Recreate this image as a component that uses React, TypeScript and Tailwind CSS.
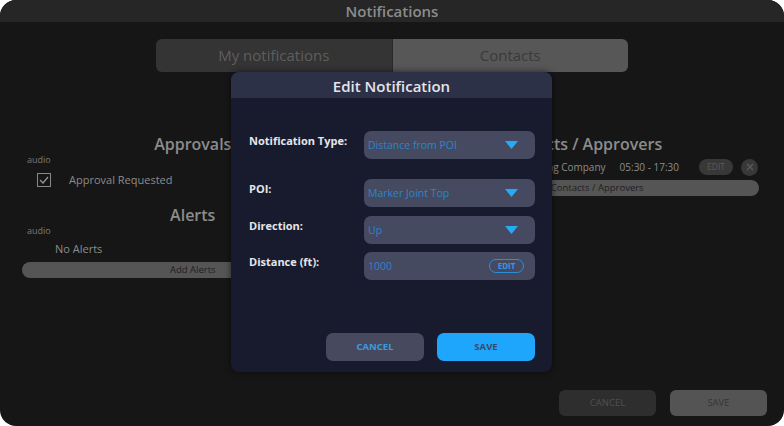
import React from "react";

const font = { fontFamily: '"Open Sans", "Noto Sans", sans-serif' };

function Caret() {
  return (
    <svg width="13" height="8" viewBox="0 0 13 8" className="shrink-0">
      <polygon points="0,0 13,0 6.5,8" fill="#29a8f5" />
    </svg>
  );
}

function Field({ value, children }: { value: string; children?: React.ReactNode }) {
  return (
    <div className="w-[171px] h-[28px] rounded-[7px] bg-[#464a60] flex items-center justify-between pl-[4px] pr-[17px]">
      <span className="mt-[2px] text-[10.5px] text-[#2b84cc]">{value}</span>
      {children}
    </div>
  );
}

function Row({ label, children, className }: { label: string; children: React.ReactNode; className?: string }) {
  return (
    <div className={"flex items-center " + (className ?? "")}>
      <div className="w-[115px] mb-[8px] text-[11px] font-bold text-[#e6e6ea]">{label}</div>
      {children}
    </div>
  );
}

export default function App() {
  return (
    <div className="w-[784px] h-[426px] bg-white" style={font}>
      <div className="relative w-[784px] h-[426px] rounded-[16px] bg-[#161616] overflow-hidden flex flex-col">
        <div className="h-[22px] bg-[#262626] flex items-center justify-center">
          <span className="text-[15px] font-semibold text-[#8c8c8c] leading-none">Notifications</span>
        </div>

        <div className="mt-[17px] mx-auto w-[472px] h-[33px] flex rounded-[6px] overflow-hidden">
          <div className="flex-1 bg-[#343434] flex items-center justify-center text-[15px] text-[#5e5e5e]">My notifications</div>
          <div className="w-px bg-[#2a2a2a]" />
          <div className="flex-1 bg-[#575757] flex items-center justify-center text-[15px] text-[#3a3a3a]">Contacts</div>
        </div>

        <div className="mt-[62px] grid grid-cols-2 gap-[54px] pl-[22px] pr-[25px] items-start">
          <div className="flex flex-col">
            <div className="h-[20px] text-center text-[16px] font-semibold text-[#8c8c8c] leading-[20px]">Approvals</div>
            <div className="h-[11px] pl-[5px] text-[9px] text-[#7a7a7a] leading-[11px]">audio</div>
            <div className="mt-[7px] h-[16px] flex items-center">
              <div className="ml-[15px] w-[14px] h-[14px] border border-[#8a8a8a] flex items-center justify-center">
                <svg width="10" height="8" viewBox="0 0 10 8">
                  <polyline points="1,4 4,7 9,1" fill="none" stroke="#9a9a9a" strokeWidth="1.2" />
                </svg>
              </div>
              <span className="ml-[18px] text-[11px] text-[#8c8c8c]">Approval Requested</span>
            </div>
            <div className="mt-[17px] h-[20px] text-center text-[16px] font-semibold text-[#8c8c8c] leading-[20px]">Alerts</div>
            <div className="h-[11px] pl-[5px] text-[9px] text-[#7a7a7a] leading-[11px]">audio</div>
            <div className="mt-[6px] h-[14px] pl-[33px] text-[11px] text-[#8c8c8c] leading-[14px]">No Alerts</div>
            <div className="mt-[6px] h-[16px] rounded-full bg-[#555555] flex items-center justify-center text-[9.5px] text-[#1e1e1e]">Add Alerts</div>
          </div>

          <div className="flex flex-col">
            <div className="h-[20px] mr-[14px] text-center text-[16px] font-semibold text-[#8c8c8c] leading-[20px]">Contacts / Approvers</div>
            <div className="mt-[5px] h-[16px] flex items-center justify-end pr-[1px]">
              <span className="text-[10px] text-[#8c8c8c]">Trucking Company</span>
              <span className="ml-[14px] text-[10px] text-[#8c8c8c]">05:30 - 17:30</span>
              <div className="ml-[20px] w-[34px] h-[16px] rounded-full bg-[#383838] flex items-center justify-center text-[8.5px] text-[#5a5a5a]">EDIT</div>
              <div className="ml-[8px] w-[17px] h-[17px] rounded-full bg-[#383838] flex items-center justify-center">
                <svg width="8" height="8" viewBox="0 0 8 8">
                  <path d="M1 1L7 7M7 1L1 7" stroke="#5a5a5a" strokeWidth="1.3" />
                </svg>
              </div>
            </div>
            <div className="mt-[5px] ml-[18px] h-[16px] rounded-full bg-[#555555] flex items-center justify-center text-[9.5px] text-[#1e1e1e]">Contacts / Approvers</div>
          </div>
        </div>

        <div className="mt-auto mb-[10px] flex justify-end gap-[14px] pr-[17px]">
          <div className="w-[97px] h-[26px] rounded-[6px] bg-[#2e2e2e] flex items-center justify-center text-[9.5px] text-[#4e4e4e]">CANCEL</div>
          <div className="w-[97px] h-[26px] rounded-[6px] bg-[#545454] flex items-center justify-center text-[9.5px] text-[#363636]">SAVE</div>
        </div>

        <div className="absolute left-[231px] top-[72px] w-[321px] h-[300px] rounded-[8px] bg-[#181b2d] overflow-hidden flex flex-col shadow-[0_0_6px_rgba(0,0,0,0.6)]">
          <div className="h-[26px] bg-[#2d3148] flex items-center justify-center">
            <span className="mt-[2px] text-[15px] font-semibold text-[#e4e4ea]">Edit Notification</span>
          </div>
          <div className="flex flex-col pl-[18px] pt-[33px]">
            <Row label="Notification Type:">
              <Field value="Distance from POI"><Caret /></Field>
            </Row>
            <Row label="POI:" className="mt-[20px]">
              <Field value="Marker Joint Top"><Caret /></Field>
            </Row>
            <Row label="Direction:" className="mt-[9px]">
              <Field value="Up"><Caret /></Field>
            </Row>
            <Row label="Distance (ft):" className="mt-[8px]">
              <div className="w-[171px] h-[28px] rounded-[7px] bg-[#464a60] flex items-center justify-between pl-[4px] pr-[11px]">
                <span className="mt-[2px] text-[10.5px] text-[#2b84cc]">1000</span>
                <div className="w-[35px] h-[14px] rounded-full border border-[#2a8fd8] flex items-center justify-center text-[8px] font-bold text-[#2d9ae6]">EDIT</div>
              </div>
            </Row>
          </div>
          <div className="mt-auto mb-[11px] flex justify-end gap-[13px] pr-[17px]">
            <div className="w-[98px] h-[28px] rounded-[7px] bg-[#474a5f] flex items-center justify-center text-[9.5px] font-bold text-[#3b9be2]">CANCEL</div>
            <div className="w-[98px] h-[28px] rounded-[7px] bg-[#1ea5fc] flex items-center justify-center text-[9.5px] font-bold text-[#3a4a6a]">SAVE</div>
          </div>
        </div>
      </div>
    </div>
  );
}
